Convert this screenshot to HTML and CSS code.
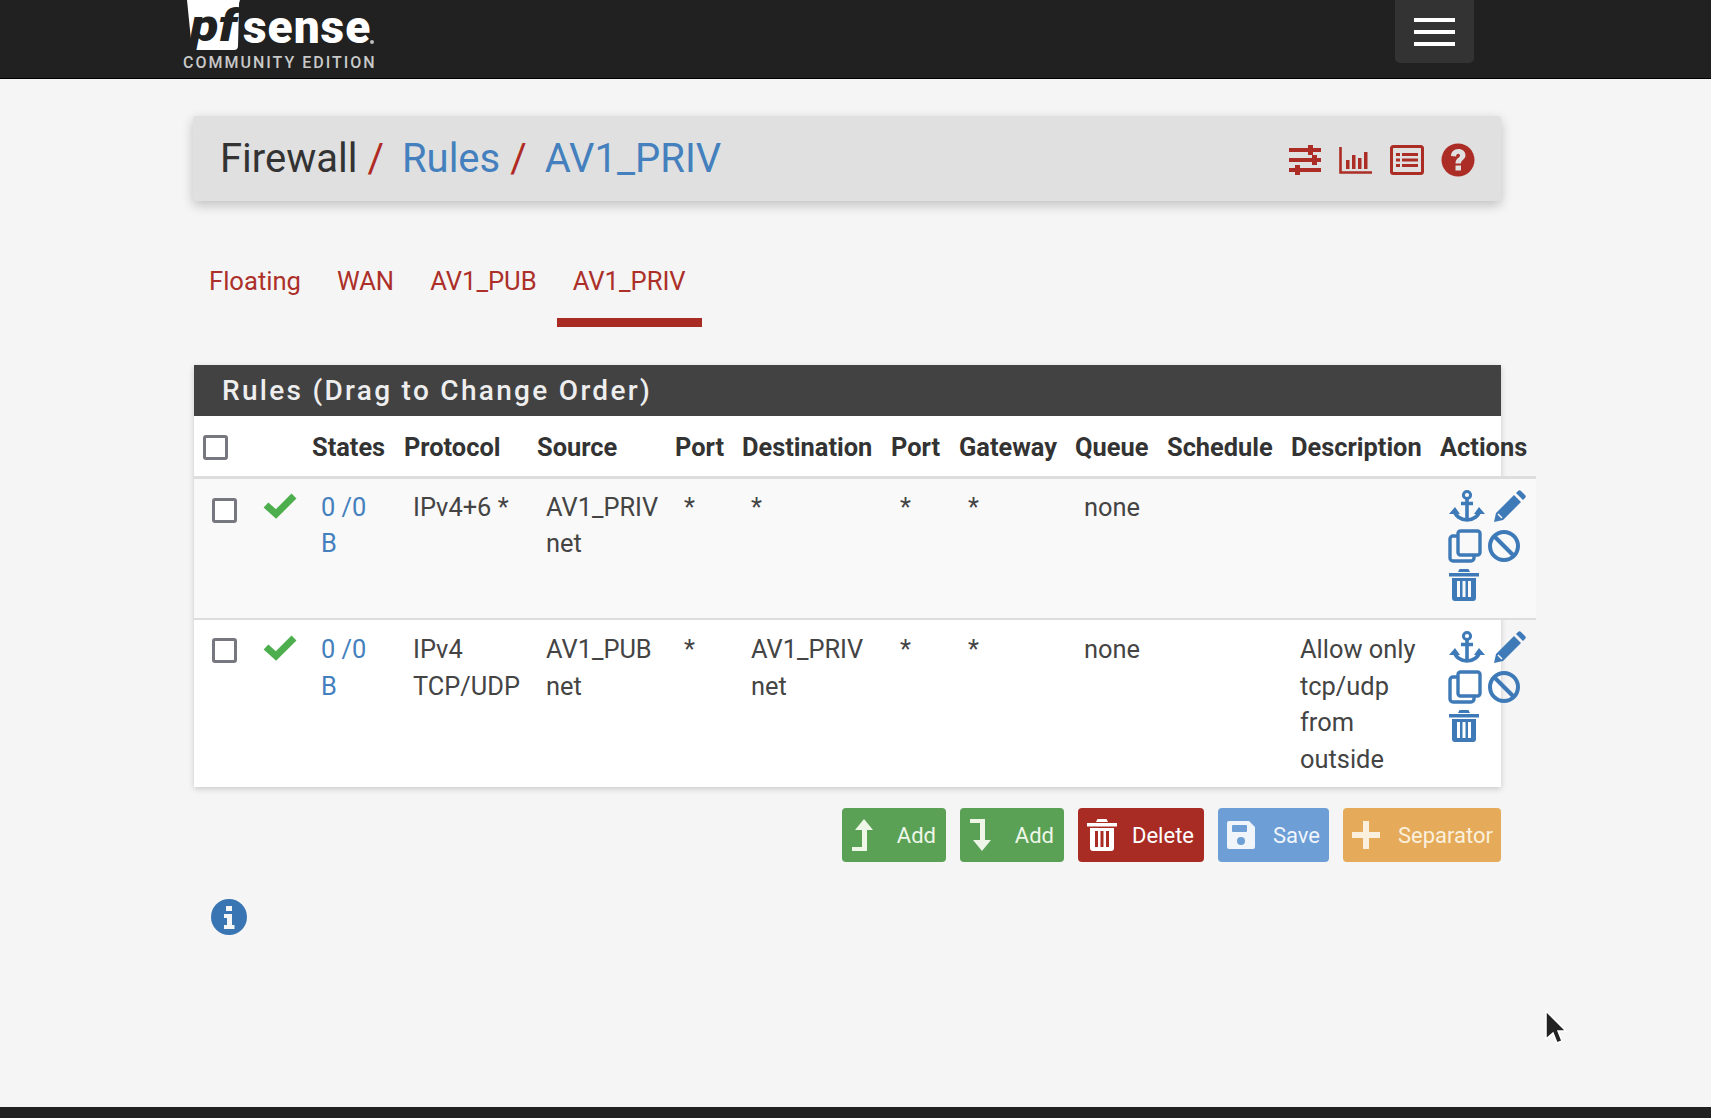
FILE: index.html
```html
<!DOCTYPE html>
<html lang="en">
<head>
  <meta charset="UTF-8" />
  <title>Firewall / Rules / AV1_PRIV</title>
  <link rel="stylesheet" href="styles.css">
</head>
<body>

  <!-- icon sprite -->
  <svg class="sprite" xmlns="http://www.w3.org/2000/svg">
    <symbol id="i-anchor" viewBox="0 0 36 36">
      <circle cx="18" cy="6" r="3.6" fill="none" stroke="currentColor" stroke-width="3"/>
      <path d="M18 10v22M12 14.500h12" fill="none" stroke="currentColor" stroke-width="3.6"/>
      <path d="M5 21c1 6 7 10 13 10s12-4 13-10" fill="none" stroke="currentColor" stroke-width="3.6"/>
      <path d="M0 25l6-7 5 7zM25 25l5-7 6 7z" fill="currentColor"/>
    </symbol>
    <symbol id="i-pencil" viewBox="0 0 36 36">
      <path d="M3 33l2-9L23 6l7 7-18 18zM25 4l2-2c1-1 2-1 3 0l4 4c1 1 1 2 0 3l-2 2z" fill="currentColor"/>
      <path d="M7 25l4 4" stroke="#fff" stroke-width="1.400" fill="none"/>
    </symbol>
    <symbol id="i-copy" viewBox="0 0 36 36">
      <rect x="11" y="3" width="22" height="24" rx="2.500" fill="none" stroke="currentColor" stroke-width="3.400"/>
      <path d="M11 8H6a3 3 0 0 0-3 3v19a3 3 0 0 0 3 3h18a3 3 0 0 0 3-3v-3" fill="none" stroke="currentColor" stroke-width="3.400"/>
    </symbol>
    <symbol id="i-ban" viewBox="0 0 36 36">
      <circle cx="18" cy="18" r="14" fill="none" stroke="currentColor" stroke-width="4"/>
      <path d="M8 8l20 20" stroke="currentColor" stroke-width="4"/>
    </symbol>
    <symbol id="i-trash" viewBox="0 0 36 36">
      <path d="M3 6h30v3.500H3zM12 5l1.500-3h9L24 5z" fill="currentColor"/>
      <path fill-rule="evenodd" d="M6 11h24v20a3 3 0 0 1-3 3H9a3 3 0 0 1-3-3zM11 14v16h3V14zM16.500 14v16h3V14zM22 14v16h3V14z" fill="currentColor"/>
    </symbol>
    <symbol id="i-check" viewBox="0 0 34 26">
      <path d="M3 12l10 9L31 3" fill="none" stroke="currentColor" stroke-width="7"/>
    </symbol>
  </svg>

  <div class="page">
    <header class="topbar">
      <svg class="logo" viewBox="0 0 200 72" width="200" height="72">
        <path d="M4 0H57Q56 2 56 6L55 46Q55 50 51 50H9Z" fill="#fff"/>
        <text x="7" y="41" class="logo-pf" textLength="47" lengthAdjust="spacingAndGlyphs">pf</text>
        <text x="60" y="43" class="logo-sense">sense</text>
        <circle cx="189" cy="42" r="2" fill="#bbb"/>
        <text x="0" y="68" class="logo-sub">COMMUNITY EDITION</text>
      </svg>
      <button class="menu-btn"><span></span><span></span><span></span></button>
    </header>

    <main class="content">
      <div class="crumbs">
        <h1>
          <span class="crumb-first">Firewall</span><span class="sep">/</span>
          <a href="#">Rules</a><span class="sep">/</span>
          <a href="#">AV1_PRIV</a>
        </h1>
        <div class="crumb-icons">
          <svg width="34" height="30" viewBox="0 0 34 30">
            <path d="M1 5h32M1 15h32M1 25h32" stroke="currentColor" stroke-width="4"/>
            <path d="M20 0h5v10h-5zM24 10h5v10h-5zM7 20h5v10H7z" fill="currentColor"/>
          </svg>
          <svg width="34" height="30" viewBox="0 0 34 30">
            <path d="M1.500 2v25.500H33" fill="none" stroke="currentColor" stroke-width="2.600"/>
            <path d="M7 15h3.500v9H7zM13 10h3.500v14H13zM19 13h3.500v11H19zM25 7h3.500v17H25z" fill="currentColor"/>
          </svg>
          <svg width="34" height="30" viewBox="0 0 34 30">
            <rect x="1.500" y="1.500" width="31" height="27" rx="2" fill="none" stroke="currentColor" stroke-width="3"/>
            <path d="M6 8h4v3H6zM6 13.500h4v3H6zM6 19h4v3H6zM12 8h16v3H12zM12 13.500h16v3H12zM12 19h16v3H12z" fill="currentColor"/>
          </svg>
          <svg width="34" height="34" viewBox="0 0 34 34">
            <circle cx="17" cy="17" r="16.500" fill="currentColor"/>
            <path d="M10 13c0-4 3-7 7.300-7s7.200 2.600 7.200 6.200c0 4.300-4.500 4.600-4.500 8.300h-5.500c0-5.500 4.500-5.600 4.500-8 0-1-.8-1.700-1.900-1.700s-1.900.8-2 2.700z" fill="#e0e0e0"/>
            <rect x="14.500" y="22.500" width="5.500" height="5" fill="#e0e0e0"/>
          </svg>
        </div>
      </div>

      <ul class="tabs">
        <li><a href="#">Floating</a></li>
        <li><a href="#">WAN</a></li>
        <li><a href="#">AV1_PUB</a></li>
        <li class="active"><a href="#">AV1_PRIV</a></li>
      </ul>

      <div class="panel">
        <h2 class="panel-title">Rules (Drag to Change Order)</h2>
        <table class="rules">
          <colgroup>
            <col class="c-box"><col class="c-stat"><col class="c-states"><col class="c-proto"><col class="c-src"><col class="c-port">
            <col class="c-dest"><col class="c-port2"><col class="c-gw"><col class="c-queue"><col class="c-sched"><col class="c-desc"><col class="c-act">
          </colgroup>
          <thead>
            <tr>
              <th><input type="checkbox"></th>
              <th></th>
              <th>States</th>
              <th>Protocol</th>
              <th>Source</th>
              <th>Port</th>
              <th>Destination</th>
              <th>Port</th>
              <th>Gateway</th>
              <th>Queue</th>
              <th>Schedule</th>
              <th>Description</th>
              <th>Actions</th>
            </tr>
          </thead>
          <tbody>
            <tr class="odd">
              <td><input type="checkbox"></td>
              <td><svg class="ok" width="34" height="26"><use href="#i-check"/></svg></td>
              <td><a href="#">0 /0<br>B</a></td>
              <td>IPv4+6 *</td>
              <td>AV1_PRIV net</td>
              <td>*</td>
              <td>*</td>
              <td>*</td>
              <td>*</td>
              <td>none</td>
              <td></td>
              <td></td>
              <td>
                <div class="actions">
                  <svg><use href="#i-anchor"/></svg>
                  <svg><use href="#i-pencil"/></svg>
                  <svg class="copy"><use href="#i-copy"/></svg>
                  <svg class="ban"><use href="#i-ban"/></svg>
                  <svg class="trash"><use href="#i-trash"/></svg>
                </div>
              </td>
            </tr>
            <tr>
              <td><input type="checkbox"></td>
              <td><svg class="ok" width="34" height="26"><use href="#i-check"/></svg></td>
              <td><a href="#">0 /0<br>B</a></td>
              <td>IPv4 TCP/UDP</td>
              <td>AV1_PUB net</td>
              <td>*</td>
              <td>AV1_PRIV net</td>
              <td>*</td>
              <td>*</td>
              <td>none</td>
              <td></td>
              <td>Allow only tcp/udp from outside</td>
              <td>
                <div class="actions">
                  <svg><use href="#i-anchor"/></svg>
                  <svg><use href="#i-pencil"/></svg>
                  <svg class="copy"><use href="#i-copy"/></svg>
                  <svg class="ban"><use href="#i-ban"/></svg>
                  <svg class="trash"><use href="#i-trash"/></svg>
                </div>
              </td>
            </tr>
          </tbody>
        </table>
      </div>

      <div class="buttons">
        <a class="btn green" href="#">
          <svg width="24" height="34" viewBox="0 0 24 34"><path d="M14 1l9 11h-6v21H2v-4h10V12H5z" fill="currentColor"/></svg>
          Add
        </a>
        <a class="btn green" href="#">
          <svg width="24" height="34" viewBox="0 0 24 34"><path d="M2 1h15v21h6l-9 11-9-11h7V5H2z" fill="currentColor"/></svg>
          Add
        </a>
        <a class="btn red" href="#">
          <svg width="36" height="36" viewBox="0 0 36 36"><use href="#i-trash"/></svg>
          Delete
        </a>
        <a class="btn blue" href="#">
          <svg width="30" height="30" viewBox="0 0 30 30"><path d="M3 1h20l6 6v20a2 2 0 0 1-2 2H3a2 2 0 0 1-2-2V3a2 2 0 0 1 2-2z" fill="currentColor"/><rect x="6" y="5" width="15" height="7" rx="1" fill="#6d9ed6"/><circle cx="15" cy="21" r="4" fill="#6d9ed6"/></svg>
          Save
        </a>
        <a class="btn orange" href="#">
          <svg width="30" height="30" viewBox="0 0 30 30"><path d="M12 1h6v11h11v6H18v11h-6V18H1v-6h11z" fill="currentColor"/></svg>
          Separator
        </a>
      </div>

      <svg class="info" width="36" height="36" viewBox="0 0 36 36">
        <circle cx="18" cy="18" r="18" fill="currentColor"/>
        <path d="M15 7h6v5h-6zM13 15h8v11h2.500v4h-10.500v-4h3v-7h-3z" fill="#f5f5f5"/>
      </svg>
    </main>

    <footer class="bottombar"></footer>
    <svg class="cursor" width="24" height="36" viewBox="0 0 24 36">
      <path d="M3 2v28l7-6 4 10 5-2-4-10h8z" fill="#222" stroke="#fff" stroke-width="1.500"/>
    </svg>
  </div>

</body>
</html>
```

FILE: styles.css
```css
* {
  box-sizing: border-box;
}

html, body {
  margin: 0;
  height: 100%;
  background-color: #fff;
}

body {
  font-family: Roboto, "Liberation Sans", sans-serif;
  color: #333;
  overflow: hidden;
}

a {
  color: #4480bd;
  text-decoration: none;
}

.sprite {
  display: none;
}

.page {
  position: relative;
  width: 1711px;
  height: 1118px;
  background-color: #f5f5f5;
  display: flex;
  flex-direction: column;
}

/* top bar */
.topbar {
  height: 79px;
  flex-shrink: 0;
  background-color: #212121;
  border-bottom: 1px solid #000;
  padding-left: 183px;
  padding-right: 237px;
  display: flex;
  justify-content: space-between;
  align-items: flex-start;
}

.logo-pf {
  font-size: 44px;
  font-weight: 900;
  font-style: italic;
  fill: #212121;
}

.logo-sense {
  font-size: 46px;
  font-weight: 900;
  letter-spacing: 1px;
  fill: #fff;
}

.logo-sub {
  font-size: 16px;
  font-weight: 500;
  letter-spacing: 2px;
  fill: #c9c9c9;
}

.menu-btn {
  width: 79px;
  height: 63px;
  padding: 0;
  border: none;
  border-radius: 0 0 5px 5px;
  background-color: #333;
  display: flex;
  flex-direction: column;
  align-items: center;
  justify-content: center;
  gap: 8px;
}

.menu-btn span {
  width: 41px;
  height: 4px;
  background-color: #fff;
}

/* main */
.content {
  flex: 1;
  width: 1309px;
  margin-left: 193px;
}

.crumbs {
  margin-top: 37px;
  width: 1308px;
  height: 85px;
  background-color: #e0e0e0;
  border-radius: 3px;
  box-shadow: 0 4px 12px rgba(0, 0, 0, 0.22);
  padding: 0 26px 0 27px;
  display: flex;
  justify-content: space-between;
  align-items: center;
}

.crumbs h1 {
  margin: 0;
  font-size: 40px;
  font-weight: 400;
  color: #333;
}

.sep {
  color: #b02a24;
  margin-left: 10px;
  margin-right: 8px;
}

.crumb-icons {
  display: flex;
  align-items: center;
  gap: 17px;
  margin-top: 2px;
  color: #ab2d25;
}

.tabs {
  list-style: none;
  margin: 37px 0 0 0;
  padding: 0;
  display: flex;
  height: 89px;
}

.tabs li {
  height: 89px;
  padding: 0 16px;
  margin-right: 4px;
  line-height: 87px;
  font-size: 25.6px;
}

.tabs a {
  color: #ac3029;
}

.tabs li.active {
  border-bottom: 9px solid #a92c24;
}

.panel {
  margin-top: 38px;
  margin-left: 1px;
  width: 1307px;
  height: 422px;
  background-color: #fff;
  box-shadow: 0 2px 6px rgba(0, 0, 0, 0.18);
}

.panel-title {
  margin: 0;
  height: 51px;
  line-height: 51px;
  padding-left: 28px;
  background-color: #424242;
  color: #eee;
  font-size: 28px;
  font-weight: 500;
  letter-spacing: 2.3px;
}

/* rules table */
.rules {
  width: 1342px;
  table-layout: fixed;
  border-collapse: collapse;
  font-size: 25.4px;
  line-height: 36.6px;
}

.c-box { width: 51px; }
.c-stat { width: 58px; }
.c-states { width: 92px; }
.c-proto { width: 133px; }
.c-src { width: 138px; }
.c-port { width: 67px; }
.c-dest { width: 149px; }
.c-port2 { width: 68px; }
.c-gw { width: 116px; }
.c-queue { width: 92px; }
.c-sched { width: 124px; }
.c-desc { width: 149px; }
.c-act { width: 105px; }

.rules th {
  height: 61px;
  padding: 4px 0 0 9px;
  text-align: left;
  white-space: nowrap;
  font-weight: 700;
  color: #333;
  border-bottom: 3px solid #ddd;
}

.rules td {
  padding: 10px 0 10px 18px;
  vertical-align: top;
  color: #444;
}

.rules tbody tr + tr td {
  padding-top: 11px;
  border-top: 2px solid #ddd;
}

.rules tr.odd td {
  height: 142px;
  background-color: #f9f9f9;
}

input[type="checkbox"] {
  appearance: none;
  display: block;
  width: 25px;
  height: 25px;
  margin: 0;
  background-color: #fff;
  border: 3px solid #77777f;
  border-radius: 3px;
}

.rules td input[type="checkbox"] {
  margin-top: 9px;
}

.rules tbody tr + tr td input[type="checkbox"] {
  margin-top: 7px;
}

.ok {
  display: block;
  margin-top: 4px;
  color: #4cae4c;
}

.actions {
  width: 84px;
  display: flex;
  flex-wrap: wrap;
  gap: 3px 6px;
  color: #3f7ab8;
}

.rules tbody tr + tr .actions {
  margin-top: -1px;
}

.actions svg {
  width: 36px;
  height: 36px;
}

.actions .copy {
  margin-left: -2px;
}

.actions .ban {
  margin-left: -3px;
}

.actions .trash {
  margin-left: -3px;
}

/* buttons */
.buttons {
  margin-top: 21px;
  margin-right: 1px;
  display: flex;
  justify-content: flex-end;
  gap: 14px;
}

.btn {
  height: 54px;
  border-radius: 4px;
  padding: 0 10px 0 8px;
  display: flex;
  align-items: center;
  justify-content: space-between;
  color: #fff;
  font-size: 22px;
}

.btn.green { width: 104px; background-color: #5aa155; color: #eef6e8; }
.btn.red { width: 126px; background-color: #a92c24; padding-left: 6px; }
.btn.blue { width: 111px; background-color: #6d9ed6; color: #f0f5fb; padding-right: 9px; }
.btn.orange { width: 158px; background-color: #e5ab5a; color: #fbf0dd; padding-right: 8px; }

.info {
  display: block;
  margin-top: 37px;
  margin-left: 18px;
  color: #3a75b3;
}

.bottombar {
  height: 11px;
  flex-shrink: 0;
  background-color: #212121;
}

.cursor {
  position: absolute;
  left: 1543px;
  top: 1009px;
}
```
